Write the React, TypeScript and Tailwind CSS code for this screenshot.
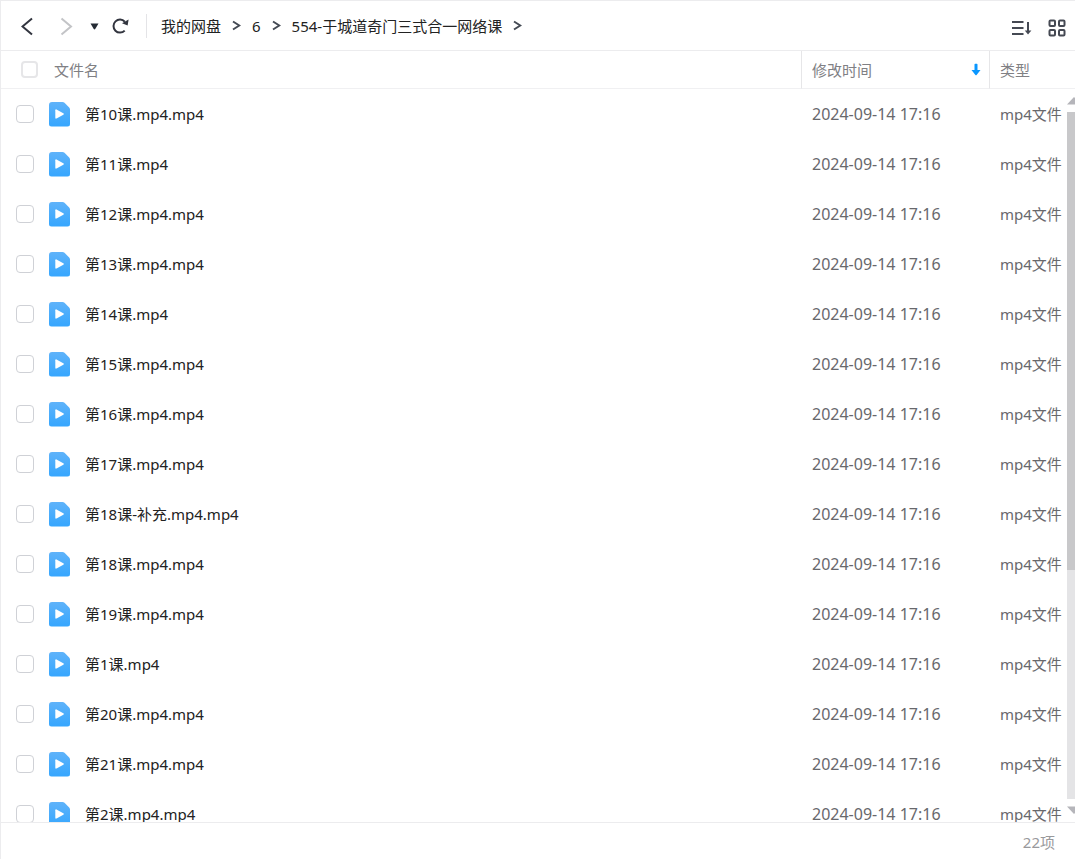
import React from 'react';

const files = [
  '第10课.mp4.mp4',
  '第11课.mp4',
  '第12课.mp4.mp4',
  '第13课.mp4.mp4',
  '第14课.mp4',
  '第15课.mp4.mp4',
  '第16课.mp4.mp4',
  '第17课.mp4.mp4',
  '第18课-补充.mp4.mp4',
  '第18课.mp4.mp4',
  '第19课.mp4.mp4',
  '第1课.mp4',
  '第20课.mp4.mp4',
  '第21课.mp4.mp4',
  '第2课.mp4.mp4',
];

const crumbs = ['我的网盘', '6', '554-于城道奇门三式合一网络课'];

const VideoIcon = () => (
  <svg width="21" height="25" viewBox="0 0 21 25" className="shrink-0" aria-hidden="true">
    <defs>
      <linearGradient id="video-fill" x1="0" y1="0" x2="0" y2="1">
        <stop offset="0" stopColor="#5fb3fa" />
        <stop offset="1" stopColor="#36a6fe" />
      </linearGradient>
    </defs>
    <path d="M3 0H13.500Q14.700 0 15.500 .8L20.200 5.500Q21 6.300 21 7.500V22a2.500 2.500 0 0 1-2.500 2.500H2.500A2.500 2.500 0 0 1 0 22V3A3 3 0 0 1 3 0Z" fill="url(#video-fill)" />
    <path d="M6.300 8.200v7.600c0 .8.6 1 1.200.7l6.800-3.700c.7-.4.7-1.200 0-1.600L7.500 7.500C6.900 7.200 6.300 7.400 6.300 8.200Z" fill="#fff" />
  </svg>
);

const CrumbArrow = () => (
  <svg width="9" height="12" viewBox="0 0 9 12" fill="none" stroke="#444a54" strokeWidth="2" aria-hidden="true">
    <path d="M1 1.500L7.300 5.500L1 9.500" />
  </svg>
);

const Toolbar = () => (
  <header className="flex h-[51px] shrink-0 items-center justify-between border-y border-[#ececee] pr-[9px] pl-5">
    <div className="flex items-center">
      <button aria-label="后退">
        <svg width="14" height="20" viewBox="0 0 14 20" fill="none" stroke="#32353f" strokeWidth="2">
          <path d="M11 2.500L1.500 10.500L11 18.500" />
        </svg>
      </button>
      <button aria-label="前进" className="ml-6">
        <svg width="14" height="20" viewBox="0 0 14 20" fill="none" stroke="#c3c4c7" strokeWidth="2">
          <path d="M2.500 2.500L12 10.500L2.500 18.500" />
        </svg>
      </button>
      <button aria-label="历史记录" className="ml-4">
        <svg width="10" height="8" viewBox="0 0 10 8">
          <path d="M1.500 1.500H9.500L6.400 6.800Q5.500 8 4.600 6.800Z" fill="#252b35" />
        </svg>
      </button>
      <button aria-label="刷新" className="ml-3">
        <svg width="18" height="18" viewBox="0 0 18 18" fill="none">
          <path d="M13.700 13.600A6.500 6.500 0 1 1 13.800 4.700" stroke="#32353f" strokeWidth="2" />
          <path d="M11 6.200L16.600 8.400L17.600 2.600Z" fill="#32353f" />
        </svg>
      </button>
      <span className="ml-[17px] h-6 w-px bg-[#e4e4e7]" />
      <nav aria-label="路径" className="ml-[14px] flex items-center gap-[11px] text-[#222]">
        {crumbs.map((crumb) => (
          <React.Fragment key={crumb}>
            <a href="#">{crumb}</a>
            <CrumbArrow />
          </React.Fragment>
        ))}
      </nav>
    </div>
    <div className="flex items-center gap-4 pt-1">
      <button aria-label="排序">
        <svg width="21" height="18" viewBox="0 0 21 18" fill="none" stroke="#454953" strokeWidth="2">
          <path d="M1 3H12.500M1 9H12.500M1 15H12.500M17 3V14" />
          <path d="M13.800 11.500H20.400L17 15.500Z" fill="#454953" stroke="none" />
        </svg>
      </button>
      <button aria-label="网格视图">
        <svg width="18" height="18" viewBox="0 0 18 18" fill="none" stroke="#454953" strokeWidth="2">
          <rect x="1.500" y="1.500" width="5.500" height="5.500" rx="1" />
          <rect x="11" y="1.500" width="5.500" height="5.500" rx="1" />
          <rect x="1.500" y="11" width="5.500" height="5.500" rx="1" />
          <rect x="11" y="11" width="5.500" height="5.500" rx="1" />
        </svg>
      </button>
    </div>
  </header>
);

const Scrollbar = () => (
  <div className="absolute top-[38px] right-0 bottom-0 flex w-2 flex-col overflow-hidden py-2" aria-hidden="true">
    <svg width="16" height="8" viewBox="0 0 16 8" className="shrink-0">
      <path d="M0 7.500L7 0L14 7.500Z" fill="#b5b5ba" />
    </svg>
    <div className="my-[7px] flex-1 bg-[#e4e4e6]">
      <div className="h-2/3 bg-[#c8c8ca]" />
    </div>
    <svg width="16" height="8" viewBox="0 0 16 8" className="shrink-0">
      <path d="M0 .5L7 8L14 .5Z" fill="#b5b5ba" />
    </svg>
  </div>
);

const App = () => {
  return (
    <div className="flex h-screen flex-col border-l border-[#ececee] bg-white font-['Noto_Sans','Noto_Sans_CJK_SC',sans-serif] text-[15px] leading-5">
      <Toolbar />
      <main className="relative min-h-0 flex-1 overflow-hidden">
        <table className="w-full table-fixed border-separate border-spacing-0 text-left whitespace-nowrap text-[#68686c]">
          <thead>
            <tr className="h-[38px] text-[#808084]">
              <th className="border-b border-[#f0f0f2] p-0 font-normal">
                <label className="flex items-center gap-4 pl-5">
                  <input type="checkbox" className="size-[17px] appearance-none rounded border-2 border-[#e6e6e8] bg-white" />
                  文件名
                </label>
              </th>
              <th className="w-[188px] border-b border-l border-[#f0f0f2] border-l-[#e6e6e8] p-0 font-normal">
                <button className="flex w-full items-center justify-between pr-2 pl-[10px]">
                  修改时间
                  <svg width="10" height="14" viewBox="0 0 10 14" aria-hidden="true">
                    <path d="M3.500 1.500Q3.500.8 4.200.8H5.800Q6.500.8 6.500 1.500V7H9.500L5.600 12Q5 12.700 4.400 12L.5 7H3.500Z" fill="#0a97ff" />
                  </svg>
                </button>
              </th>
              <th className="w-[86px] border-b border-l border-[#f0f0f2] border-l-[#e6e6e8] p-0 pl-[10px] font-normal">类型</th>
            </tr>
          </thead>
          <tbody>
            {files.map((name) => (
              <tr key={name} className="h-[50px]">
                <td className="p-0">
                  <label className="flex items-center pl-[15px] text-[#222]">
                    <input type="checkbox" className="mr-[15px] size-[18px] appearance-none rounded border border-[#cfd1d6] bg-white" />
                    <VideoIcon />
                    <span className="ml-[15px]">{name}</span>
                  </label>
                </td>
                <td className="p-0 pl-[11px] text-base leading-5">2024-09-14 17:16</td>
                <td className="p-0 pl-[11px]">mp4文件</td>
              </tr>
            ))}
          </tbody>
        </table>
        <Scrollbar />
      </main>
      <footer className="flex h-[37px] shrink-0 items-center justify-end border-t border-[#ececee] pr-5 pt-[2px] text-[#99999c]">22项</footer>
    </div>
  );
};

export default App;
